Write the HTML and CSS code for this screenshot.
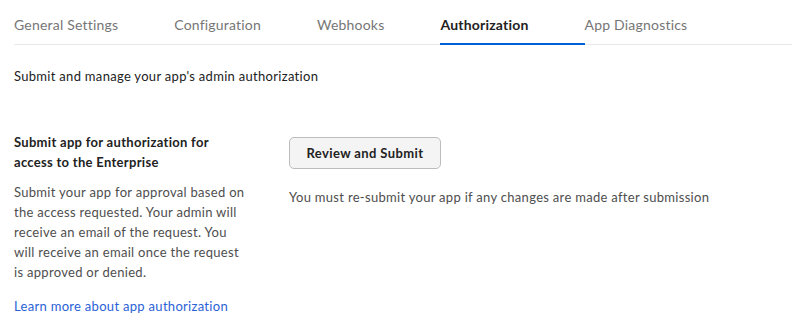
FILE: index.html
```html
<!DOCTYPE html>
<html>
<head>
<meta charset="utf-8">
<link rel="stylesheet" href="styles.css">
</head>
<body>
<div class="page">
  <nav class="tabs">
    <a class="tab">General Settings</a>
    <a class="tab">Configuration</a>
    <a class="tab">Webhooks</a>
    <a class="tab active">Authorization</a>
    <a class="tab">App Diagnostics</a>
  </nav>
  <p class="subtitle">Submit and manage your app's admin authorization</p>
  <section class="row">
    <div class="left">
      <h3 class="heading">Submit app for authorization for access to the Enterprise</h3>
      <p class="desc">Submit your app for approval based on the access requested. Your admin will receive an email of the request. You will receive an email once the request is approved or denied.</p>
      <a class="link">Learn more about app authorization</a>
    </div>
    <div class="right">
      <button class="btn">Review and Submit</button>
      <p class="note">You must re-submit your app if any changes are made after submission</p>
    </div>
  </section>
</div>
</body>
</html>
```

FILE: styles.css
```css
* { box-sizing: border-box; }
html, body { margin: 0; padding: 0; background: #fff; }
body {
  font-family: Lato, "Open Sans", sans-serif;
  color: #222;
  font-size: 13px;
  line-height: 20px;
  letter-spacing: 0.3px;
}
.page { padding-left: 14px; }
.tabs {
  display: flex;
  border-bottom: 1px solid #e8e8e8;
}
.tab {
  font-size: 14px;
  line-height: 20px;
  color: #767676;
  padding: 15px 56px 8px 0;
  border-bottom: 2px solid transparent;
  margin-bottom: -1px;
  letter-spacing: 0.2px;
}
.tab.active {
  color: #222;
  font-weight: 700;
  border-bottom-color: #0061d5;
}
.subtitle {
  margin: 21px 0 0;
}
.row {
  display: flex;
  margin-top: 46px;
}
.left { width: 234px; margin-right: 41px; flex: none; }
.heading {
  margin: 0;
  font-size: 13px;
  font-weight: 700;
  line-height: 20px;
  color: #222;
}
.desc {
  margin: 10px 0 0;
  color: #4e4e4e;
}
.link {
  display: block;
  margin-top: 14px;
  color: #2a62d6;
}
.right { padding-top: 5px; }
.btn {
  display: block;
  font-family: inherit;
  font-size: 13px;
  font-weight: 700;
  letter-spacing: 0.4px;
  color: #222;
  width: 152px;
  height: 32px;
  background: #f4f4f4;
  border: 1px solid #bcbcbc;
  border-radius: 5px;
  padding: 0;
}
.note {
  margin: 18px 0 0;
  color: #4e4e4e;
}
```
